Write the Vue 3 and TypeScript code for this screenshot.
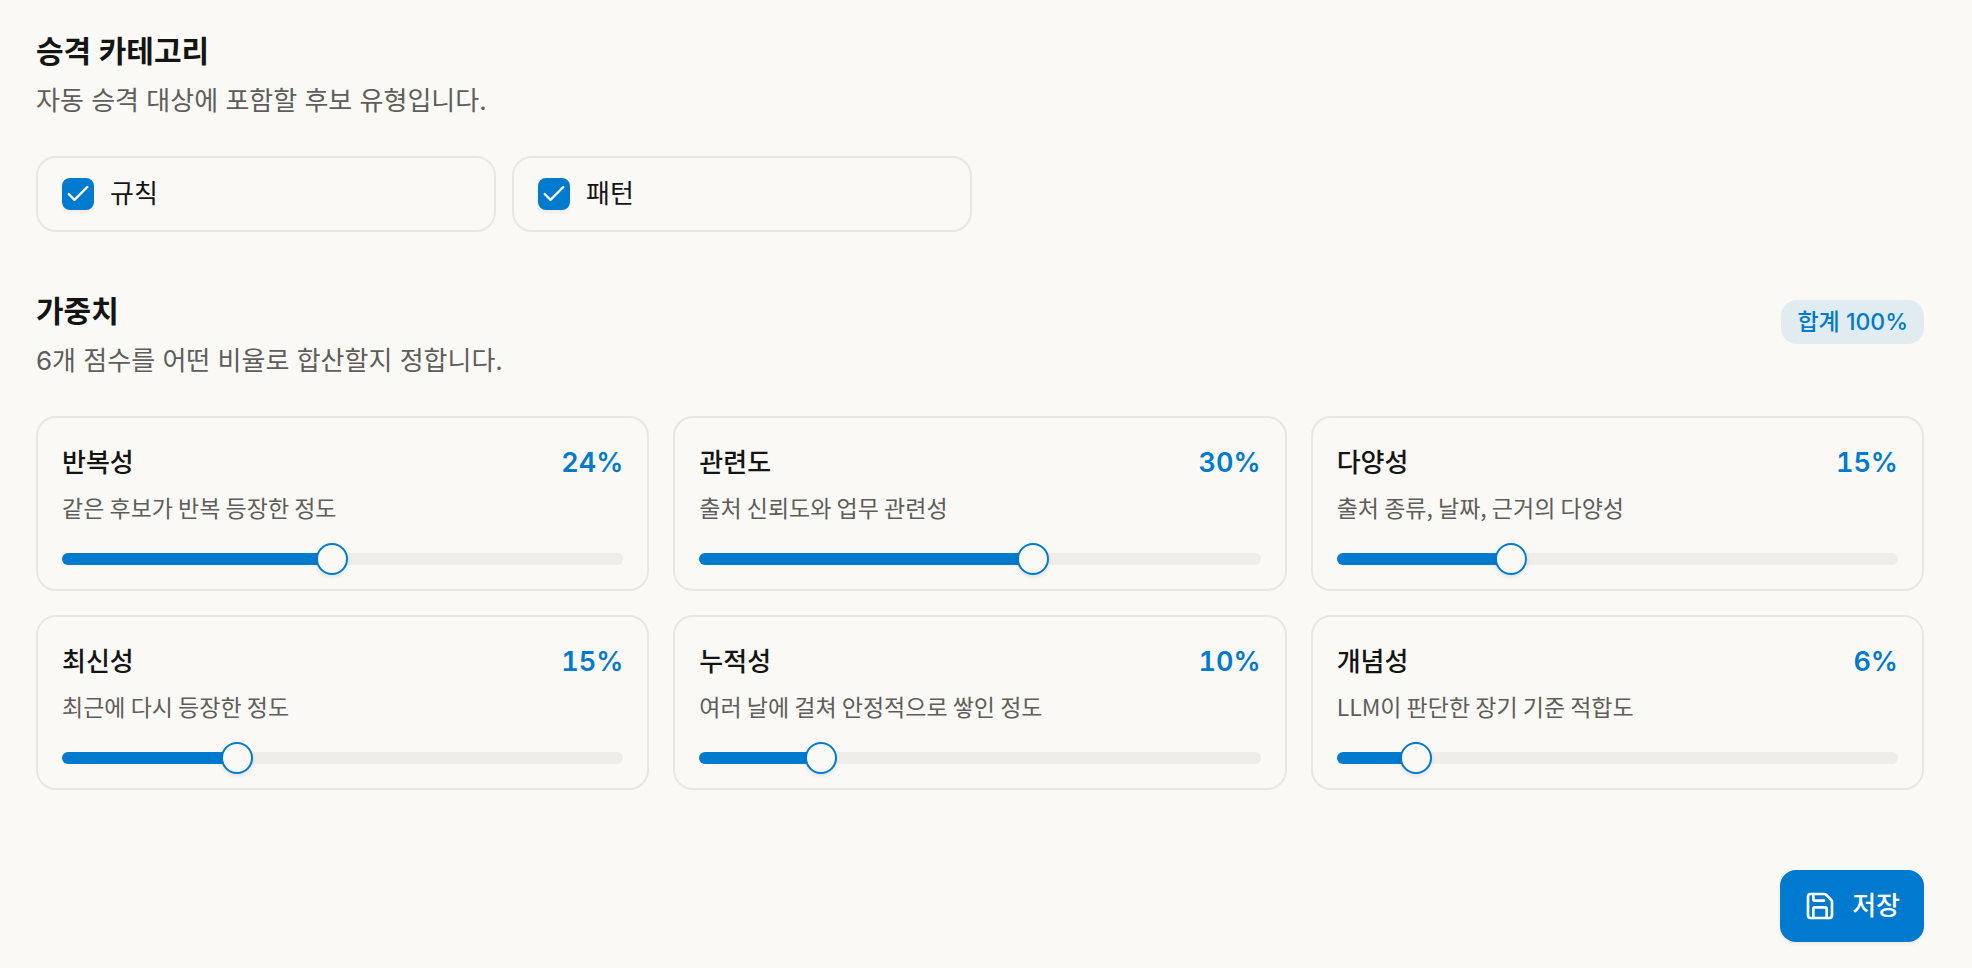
<script setup lang="ts">
import { computed, reactive } from 'vue'

interface Category {
  id: string
  label: string
  enabled: boolean
}

interface Weight {
  id: string
  label: string
  description: string
  value: number
}

const MAX_WEIGHT = 50

const categories = reactive<Category[]>([
  { id: 'rule', label: '규칙', enabled: true },
  { id: 'pattern', label: '패턴', enabled: true },
])

const weights = reactive<Weight[]>([
  { id: 'frequency', label: '반복성', description: '같은 후보가 반복 등장한 정도', value: 24 },
  { id: 'relevance', label: '관련도', description: '출처 신뢰도와 업무 관련성', value: 30 },
  { id: 'diversity', label: '다양성', description: '출처 종류, 날짜, 근거의 다양성', value: 15 },
  { id: 'recency', label: '최신성', description: '최근에 다시 등장한 정도', value: 15 },
  { id: 'accumulation', label: '누적성', description: '여러 날에 걸쳐 안정적으로 쌓인 정도', value: 10 },
  { id: 'concept', label: '개념성', description: 'LLM이 판단한 장기 기준 적합도', value: 6 },
])

const total = computed(() => weights.reduce((sum, w) => sum + w.value, 0))
</script>

<template>
  <form class="settings" @submit.prevent>
    <section class="section">
      <header class="heading">
        <div>
          <h2 class="title">승격 카테고리</h2>
          <p class="subtitle">자동 승격 대상에 포함할 후보 유형입니다.</p>
        </div>
      </header>
      <div class="categories">
        <label v-for="c in categories" :key="c.id" class="category">
          <span class="check">
            <input v-model="c.enabled" type="checkbox" class="check-input" />
            <svg v-if="c.enabled" class="check-mark" viewBox="0 0 24 24" aria-hidden="true">
              <path d="M20 6 9 17l-5-5" />
            </svg>
          </span>
          <span>{{ c.label }}</span>
        </label>
      </div>
    </section>

    <section class="section">
      <header class="heading">
        <div>
          <h2 class="title">가중치</h2>
          <p class="subtitle">6개 점수를 어떤 비율로 합산할지 정합니다.</p>
        </div>
        <output class="badge">합계 {{ total }}%</output>
      </header>
      <div class="weights">
        <article v-for="w in weights" :key="w.id" class="weight">
          <div class="weight-head">
            <label :for="w.id" class="weight-label">{{ w.label }}</label>
            <span class="weight-value">{{ w.value }}%</span>
          </div>
          <p class="weight-desc">{{ w.description }}</p>
          <input
            :id="w.id"
            v-model.number="w.value"
            class="slider"
            type="range"
            min="0"
            :max="MAX_WEIGHT"
            :style="{ '--ratio': w.value / MAX_WEIGHT }"
          />
        </article>
      </div>
    </section>

    <footer class="actions">
      <button type="submit" class="save">
        <svg class="save-icon" viewBox="0 0 24 24" aria-hidden="true">
          <path d="M15.2 3a2 2 0 0 1 1.4.6l3.8 3.8a2 2 0 0 1 .6 1.4V19a2 2 0 0 1-2 2H5a2 2 0 0 1-2-2V5a2 2 0 0 1 2-2z" />
          <path d="M17 21v-7a1 1 0 0 0-1-1H8a1 1 0 0 0-1 1v7" />
          <path d="M7 3v4a1 1 0 0 0 1 1h7" />
        </svg>
        저장
      </button>
    </footer>
  </form>
</template>

<style>
body {
  background: #faf9f5;
}
</style>

<style scoped>
.settings {
  --blue: #007acf;
  --surface: #faf9f5;
  --line: #e8e7e3;
  --track: #eeede9;
  --ink: #141413;
  --muted: #5e5d59;
  box-sizing: border-box;
  display: flex;
  flex-direction: column;
  padding: 31px 48px 26px 36px;
  color: var(--ink);
  font-family: Inter, "Noto Sans CJK KR", sans-serif;
  font-size: 26px;
  line-height: 40px;
}

.section {
  display: flex;
  flex-direction: column;
  gap: 35px;
  margin-bottom: 59px;
}

.heading {
  display: flex;
  align-items: flex-start;
  justify-content: space-between;
  gap: 24px;
}

.title,
.subtitle,
.weight-desc {
  margin: 0;
}

.title {
  margin-bottom: 10px;
  font-size: 30px;
  font-weight: 600;
}

.subtitle {
  color: var(--muted);
}

.categories {
  display: grid;
  grid-template-columns: repeat(4, 1fr);
  gap: 16px;
}

.category {
  display: flex;
  align-items: center;
  gap: 16px;
  padding: 16px 24px;
  border: 2px solid var(--line);
  border-radius: 20px;
}

.check {
  display: grid;
  width: 32px;
  height: 32px;
}

.check-input,
.check-mark {
  grid-area: 1 / 1;
}

.check-input {
  appearance: none;
  width: 32px;
  height: 32px;
  margin: 0;
  border: 2px solid var(--line);
  border-radius: 8px;
  box-shadow: 0 2px 4px rgb(0 0 0 / 6%);
}

.check-input:checked {
  border-color: var(--blue);
  background: var(--blue);
}

.check-mark {
  place-self: center;
  width: 28px;
  height: 28px;
  fill: none;
  stroke: #fff;
  stroke-width: 2;
  stroke-linecap: round;
  stroke-linejoin: round;
  pointer-events: none;
}

.badge {
  margin-top: 9px;
  padding: 4px 16px;
  border-radius: 16px;
  background: #e1ecf1;
  color: var(--blue);
  font-size: 23px;
  font-weight: 500;
  line-height: 36px;
}

.weights {
  display: grid;
  grid-template-columns: repeat(3, 1fr);
  gap: 24px;
}

.weight {
  display: flex;
  flex-direction: column;
  padding: 25px 24px 14px;
  border: 2px solid var(--line);
  border-radius: 20px;
}

.weight-head {
  display: flex;
  align-items: center;
  justify-content: space-between;
}

.weight-label {
  font-weight: 500;
}

.weight-value {
  color: var(--blue);
  font-size: 27px;
  font-weight: 600;
  font-variant-numeric: tabular-nums;
}

.weight-desc {
  margin: 6px 0 18px;
  color: var(--muted);
  font-family: "Noto Sans CJK KR", sans-serif;
  font-size: 23px;
  line-height: 36px;
}

.slider {
  appearance: none;
  width: 100%;
  height: 32px;
  margin: 0;
  background: transparent;
}

.slider::-webkit-slider-runnable-track {
  height: 12px;
  border-radius: 6px;
  background:
    linear-gradient(var(--blue), var(--blue)) no-repeat 0 0 /
      calc(16px + (100% - 32px) * var(--ratio)) 100%,
    var(--track);
}

.slider::-webkit-slider-thumb {
  appearance: none;
  box-sizing: border-box;
  width: 32px;
  height: 32px;
  margin-top: -10px;
  border: 2px solid var(--blue);
  border-radius: 50%;
  background: var(--surface);
  box-shadow: 0 2px 4px rgb(0 0 0 / 10%);
}

.actions {
  display: flex;
  justify-content: flex-end;
  margin-top: 21px;
}

.save {
  display: flex;
  align-items: center;
  gap: 16px;
  padding: 16px 24px;
  border: 0;
  border-radius: 16px;
  background: var(--blue);
  box-shadow: 0 2px 4px rgb(0 0 0 / 6%);
  color: #fff;
  font: inherit;
  font-weight: 500;
}

.save-icon {
  width: 32px;
  height: 32px;
  fill: none;
  stroke: currentColor;
  stroke-width: 2;
  stroke-linecap: round;
  stroke-linejoin: round;
}
</style>
